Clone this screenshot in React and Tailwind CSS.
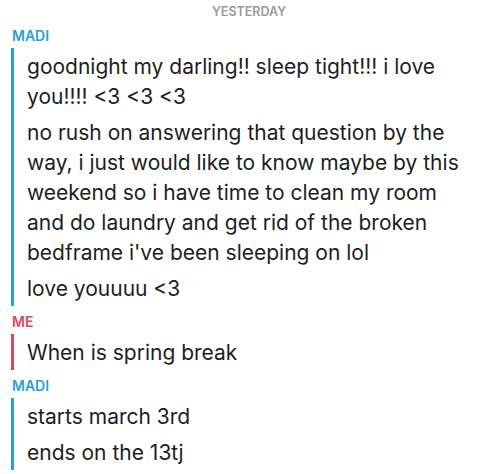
import React from 'react';

const chats = [
  {
    who: 'MADI',
    color: 'blue',
    messages: [
      ['goodnight my darling!! sleep tight!!! i love', 'you!!!! <3 <3 <3'],
      [
        'no rush on answering that question by the',
        'way, i just would like to know maybe by this',
        'weekend so i have time to clean my room',
        'and do laundry and get rid of the broken',
        "bedframe i've been sleeping on lol",
      ],
      ['love youuuu <3'],
    ],
  },
  { who: 'ME', color: 'red', messages: [['When is spring break']] },
  { who: 'MADI', color: 'blue', messages: [['starts march 3rd'], ['ends on the 13tj']] },
];

const App = () => {
  return (
    <div className="w-[498px] h-[474px] overflow-hidden bg-white font-['Inter',sans-serif] text-[#1e1e1e]">
      <div className="pt-[4px] text-center text-[12.5px] font-semibold text-[#9a9a9a] leading-[16px]">YESTERDAY</div>
      {chats.map((c, i) => (
        <div key={i} className="mt-[8px]">
          <div className={`pl-[12px] text-[14px] font-semibold leading-[16px] ${c.color === 'blue' ? 'text-[#2a9ed6]' : 'text-[#e0455e]'}`}>{c.who}</div>
          <div className={`ml-[11px] mt-[4px] border-l-[3px] pl-[13px] ${c.color === 'blue' ? 'border-[#2a9ed6]' : 'border-[#e0455e]'}`}>
            {c.messages.map((m, j) => (
              <p key={j} className="text-[21px] leading-[30px] pt-[4px] pb-[2px] whitespace-nowrap">
                {m.map((line, k) => (
                  <span key={k} className="block">{line}</span>
                ))}
              </p>
            ))}
          </div>
        </div>
      ))}
    </div>
  );
};

export default App;
